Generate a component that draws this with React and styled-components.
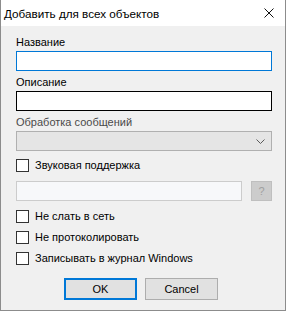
import React from "react";
import styled, { createGlobalStyle } from "styled-components";

const GlobalStyle = createGlobalStyle`
  html, body {
    margin: 0;
    padding: 0;
    background: #ffffff;
  }
  * {
    box-sizing: border-box;
  }
`;

const Window = styled.div`
  width: 286px;
  height: 311px;
  border: 1px solid #8c8c8c;
  border-top: none;
  background: #f0f0f0;
  font-family: "Liberation Sans", Arial, sans-serif;
  font-size: 11px;
  color: #000;
  display: flex;
  flex-direction: column;
`;

const TitleBar = styled.div`
  height: 26px;
  background: #ffffff;
  display: flex;
  align-items: center;
  justify-content: space-between;
  padding: 0 11px 0 3px;
  font-size: 11.7px;
`;

const Body = styled.div`
  padding: 9px 13px 0 15px;
  display: flex;
  flex-direction: column;
`;

const Label = styled.div`
  height: 16px;
  line-height: 15px;
  color: ${(p) => (p.$muted ? "#4a4a4a" : "#000")};
`;

const TextBox = styled.div`
  height: 20px;
  background: #ffffff;
  border: 1px solid ${(p) => p.$border};
  margin-bottom: ${(p) => p.$after}px;
`;

const Select = styled.div`
  height: 20px;
  background: #e5e5e5;
  border: 1px solid #b0b0b0;
  display: flex;
  align-items: center;
  justify-content: flex-end;
  padding-right: 6px;
`;

const CheckRow = styled.div`
  display: flex;
  align-items: center;
  gap: 6px;
  height: 13px;
  line-height: 13px;
  margin-top: ${(p) => p.$before}px;
`;

const Box = styled.div`
  width: 13px;
  height: 13px;
  border: 1px solid #333333;
  background: #ffffff;
  flex: none;
`;

const SoundRow = styled.div`
  display: flex;
  gap: 9px;
  margin-top: 9px;
`;

const DisabledInput = styled.div`
  width: 227px;
  height: 20px;
  border: 1px solid #cccccc;
  background: #f7f8fa;
`;

const HelpButton = styled.div`
  width: 21px;
  height: 20px;
  background: #cccccc;
  border: 1px solid #bfbfbf;
  color: #a0a0a0;
  display: flex;
  align-items: center;
  justify-content: center;
  font-size: 11px;
`;

const Buttons = styled.div`
  display: flex;
  gap: 8px;
  margin-top: 13px;
  padding-left: 48px;
`;

const Button = styled.div`
  width: 73px;
  height: 22px;
  background: #e1e1e1;
  border: ${(p) => (p.$default ? "2px solid #0078d7" : "1px solid #adadad")};
  display: flex;
  align-items: center;
  justify-content: center;
`;

function CloseIcon() {
  return (
    <svg width="10" height="10" viewBox="0 0 10 10">
      <path d="M0.5 0.5 L9.5 9.5 M9.5 0.5 L0.5 9.5" stroke="#111" strokeWidth="1" />
    </svg>
  );
}

function Chevron() {
  return (
    <svg width="9" height="5" viewBox="0 0 9 5">
      <path d="M0.5 0.5 L4.5 4.5 L8.5 0.5" stroke="#5a5a5a" strokeWidth="1" fill="none" />
    </svg>
  );
}

export default function App() {
  return (
    <>
      <GlobalStyle />
      <Window>
        <TitleBar>
          <span>Добавить для всех объектов</span>
          <CloseIcon />
        </TitleBar>
        <Body>
          <Label>Название</Label>
          <TextBox $border="#0078d7" $after={4} />
          <Label>Описание</Label>
          <TextBox $border="#000000" $after={4} />
          <Label $muted>Обработка сообщений</Label>
          <Select>
            <Chevron />
          </Select>
          <CheckRow $before={8}>
            <Box />
            <span>Звуковая поддержка</span>
          </CheckRow>
          <SoundRow>
            <DisabledInput />
            <HelpButton>?</HelpButton>
          </SoundRow>
          <CheckRow $before={9}>
            <Box />
            <span>Не слать в сеть</span>
          </CheckRow>
          <CheckRow $before={8}>
            <Box />
            <span>Не протоколировать</span>
          </CheckRow>
          <CheckRow $before={8}>
            <Box />
            <span>Записывать в журнал Windows</span>
          </CheckRow>
          <Buttons>
            <Button $default>OK</Button>
            <Button>Cancel</Button>
          </Buttons>
        </Body>
      </Window>
    </>
  );
}
